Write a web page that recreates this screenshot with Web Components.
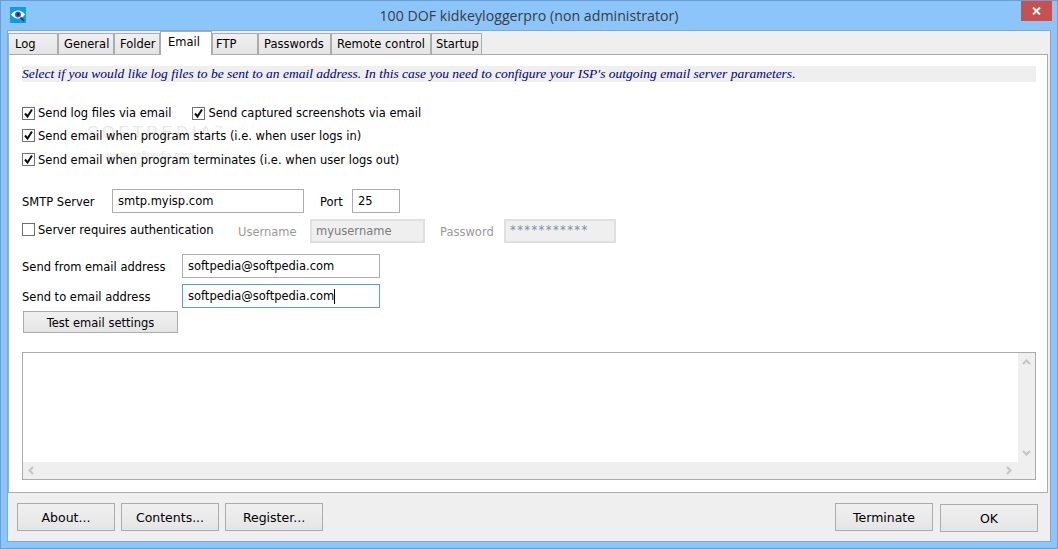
<!DOCTYPE html>
<html>
<head>
<meta charset="utf-8">
<title>100 DOF kidkeyloggerpro</title>
<style>
  html, body { margin: 0; padding: 0; height: 100%; overflow: hidden; }
  body { font: 11.5px "DejaVu Sans", sans-serif; color: #000; }
  win-button[slot] { font-size: 12.5px; }
</style>
</head>
<body>
<kid-window caption="100 DOF kidkeyloggerpro (non administrator)">
  <tab-bar slot="tabs">
    <tab-item w="50" pad="6">Log</tab-item>
    <tab-item w="56">General</tab-item>
    <tab-item w="46">Folder</tab-item>
    <tab-item w="52" pad="7" active>Email</tab-item>
    <tab-item w="46" pad="3">FTP</tab-item>
    <tab-item w="73">Passwords</tab-item>
    <tab-item w="100">Remote control</tab-item>
    <tab-item w="51" pad="4">Startup</tab-item>
  </tab-bar>

  <email-page></email-page>

  <win-button slot="left" w="98">About...</win-button>
  <win-button slot="left" w="98">Contents...</win-button>
  <win-button slot="left" w="98">Register...</win-button>
  <win-button slot="right" w="98">Terminate</win-button>
  <win-button slot="right" w="98" style="margin-top:1px">OK</win-button>
</kid-window>

<script>
class KidWindow extends HTMLElement {
  connectedCallback() {
    const caption = this.getAttribute('caption') || '';
    this.attachShadow({ mode: 'open' }).innerHTML = `
      <style>
        :host { display: flex; flex-direction: column; box-sizing: border-box; width: 1058px; height: 549px;
          background: #8bc5fa; border: 1px solid #6b9ed2; padding: 0 6px 6px 6px; }
        .title { flex: 0 0 29px; display: flex; align-items: center; justify-content: center; position: relative;
          font: 14.2px "Open Sans", sans-serif; color: #3c3c3c; }
        .title svg { position: absolute; left: 3px; top: 6px; }
        .close { position: absolute; right: -1px; top: 0; width: 31px; height: 20px; background: #c75050;
          display: flex; align-items: center; justify-content: center; }
        .panel { flex: 1; display: flex; flex-direction: column; background: #efefef; border: 1px solid #7aa9da; min-height: 0; }
        .bottom { flex: 1; display: flex; justify-content: space-between; padding: 10px 12px 0 9px; }
        .side { display: flex; gap: 6px; align-items: flex-start; }
        .side.r { gap: 7px; }
        ::slotted(tab-bar) { flex: 0 0 auto; }
      </style>
      <div class="title">
        <svg width="16" height="16" viewBox="0 0 16 16">
          <rect width="16" height="16" fill="#0a9ee2"/>
          <path d="M1 7.5 Q4 3.5 8 3.5 Q12 3.5 15 7.5 Q12 11.5 8 11.5 Q4 11.5 1 7.5Z" fill="#fff"/>
          <circle cx="8" cy="7.5" r="3" fill="#4655b8"/>
          <circle cx="8" cy="7.5" r="1.3" fill="#14205c"/>
          <path d="M10.5 10.5 L14 14" stroke="#222" stroke-width="1.6"/>
        </svg>
        <span>${caption}</span>
        <div class="close">
          <svg style="position:static" width="9" height="8" viewBox="0 0 9 8">
            <path d="M1 0.5 L8 7.5 M8 0.5 L1 7.5" stroke="#fff" stroke-width="2"/>
          </svg>
        </div>
      </div>
      <div class="panel">
        <slot name="tabs"></slot>
        <slot></slot>
        <div class="bottom">
          <div class="side"><slot name="left"></slot></div>
          <div class="side r"><slot name="right"></slot></div>
        </div>
      </div>`;
  }
}

class TabBar extends HTMLElement {
  connectedCallback() {
    this.attachShadow({ mode: 'open' }).innerHTML = `
      <style>
        :host { display: flex; align-items: flex-end; height: 23px; position: relative; z-index: 2; }
      </style>
      <slot></slot>`;
  }
}

class TabItem extends HTMLElement {
  connectedCallback() {
    const w = this.getAttribute('w');
    const pad = this.getAttribute('pad') || 5;
    this.attachShadow({ mode: 'open' }).innerHTML = `
      <style>
        :host { display: block; box-sizing: border-box; width: ${w}px; height: 21px; padding: 3px 0 0 ${pad}px;
          border: 1px solid #acacac; border-bottom: 0; background: linear-gradient(#f0f0f0, #e5e5e5); white-space: nowrap; }
        :host([active]) { height: 24px; margin-bottom: -1px; background: #fff; }
      </style>
      <slot></slot>`;
  }
}

class WinButton extends HTMLElement {
  connectedCallback() {
    const w = this.getAttribute('w');
    const h = this.getAttribute('h') || 28;
    this.attachShadow({ mode: 'open' }).innerHTML = `
      <style>
        :host { display: flex; align-items: center; justify-content: center; box-sizing: border-box;
          width: ${w}px; height: ${h}px; border: 1px solid #acacac; background: linear-gradient(#f0f0f0, #e5e5e5); white-space: nowrap; }
      </style>
      <slot></slot>`;
  }
}

class WinCheck extends HTMLElement {
  connectedCallback() {
    const mark = this.hasAttribute('checked')
      ? '<svg width="11" height="11" viewBox="0 0 11 11"><path d="M2 5.5 L4.5 8.5 L9 1.5" fill="none" stroke="#111" stroke-width="2"/></svg>'
      : '';
    this.attachShadow({ mode: 'open' }).innerHTML = `
      <style>
        :host { display: inline-flex; align-items: center; gap: 3px; white-space: nowrap; position: relative; }
        :host([low]) span { margin-top: 2px; }
        .box { box-sizing: border-box; width: 13px; height: 13px; border: 1px solid #707070; background: #fff;
          display: flex; align-items: center; justify-content: center; }
      </style>
      <div class="box">${mark}</div><span><slot></slot></span>`;
  }
}

class WinInput extends HTMLElement {
  connectedCallback() {
    const w = this.getAttribute('w');
    this.attachShadow({ mode: 'open' }).innerHTML = `
      <style>
        :host { display: flex; align-items: center; box-sizing: border-box; width: ${w}px; height: 24px; padding: 0 5px;
          border: 1px solid #acacac; background: #fff; white-space: nowrap; }
        :host([focused]) { border-color: #569de5; }
        :host([disabled]) { border: 2px solid #e0e0e0; background: #efefef; color: #7c7c7c; padding: 0 4px; }
        :host([secret]) { align-items: flex-start; color: #7f8ea3; padding-top: 2px; letter-spacing: 1.4px; }
        .caret { width: 1px; height: 15px; background: #000; }
      </style>
      <slot></slot>${this.hasAttribute('focused') ? '<div class="caret"></div>' : ''}`;
  }
}

class ScrollBox extends HTMLElement {
  connectedCallback() {
    const chev = (d) => `<svg width="9" height="9" viewBox="0 0 9 9"><path d="${d}" fill="none" stroke="#c4c4c4" stroke-width="2"/></svg>`;
    this.attachShadow({ mode: 'open' }).innerHTML = `
      <style>
        :host { display: grid; grid-template-columns: 1fr 17px; grid-template-rows: 1fr 17px; box-sizing: border-box;
          height: 128px; border: 1px solid #acacac; background: #efefef; }
        .view { background: #fff; }
        .v { display: flex; flex-direction: column; justify-content: space-between; align-items: center; padding: 5px 0; }
        .h { display: flex; justify-content: space-between; align-items: center; padding: 0 5px 0 4px; }
      </style>
      <div class="view"></div>
      <div class="v">${chev('M1 6 L4.5 2.5 L8 6')}${chev('M1 3 L4.5 6.5 L8 3')}</div>
      <div class="h">${chev('M6 1 L2.5 4.5 L6 8')}${chev('M3 1 L6.5 4.5 L3 8')}</div>
      <div></div>`;
  }
}

class EmailPage extends HTMLElement {
  connectedCallback() {
    this.attachShadow({ mode: 'open' }).innerHTML = `
      <style>
        :host { display: flex; flex-direction: column; box-sizing: border-box; position: relative; height: 439px; margin-right: 2px;
          background: #fff; border: 1px solid #acacac; padding: 11px 11px 0 13px; }
        .note { height: 16px; background: #efefef; color: #000080; white-space: nowrap;
          font: italic 13.5px/15px "Liberation Serif", serif; }
        .checks { margin-top: 20px; }
        .line { display: flex; align-items: center; height: 22px; }
        .line.gap { margin-top: 2px; }
        .line win-check:nth-child(2) { margin-left: 21px; }
        .row { display: flex; align-items: center; position: relative; }
        .row > span { margin-top: 2px; }
        .dim { color: #9a9a9a; }
        .lab1 { width: 90px; }
        .lab2 { width: 160px; }
        .mark { position: absolute; pointer-events: none; white-space: nowrap; }
        .big { left: 78px; top: 68px; color: #e9e9e9; font: 17px "Liberation Sans", sans-serif; letter-spacing: 3.5px; }
        .big sup { font-size: 8px; letter-spacing: 0; vertical-align: 7px; line-height: 0; }
        .small { left: 98px; top: 95px; color: #e6e6e6; font: 10px "Liberation Sans", sans-serif; }
      </style>
      <span class="mark big">SOFTPEDIA<sup>™</sup></span>
      <span class="mark small">www.softpedia.com</span>

      <div class="note">Select if you would like log files to be sent to an email address. In this case you need to configure your ISP's outgoing email server parameters.</div>

      <div class="checks">
        <div class="line"><win-check checked>Send log files via email</win-check><win-check checked>Send captured screenshots via email</win-check></div>
        <div class="line"><win-check checked low>Send email when program starts (i.e. when user logs in)</win-check></div>
        <div class="line gap"><win-check checked low>Send email when program terminates (i.e. when user logs out)</win-check></div>
      </div>

      <div class="row" style="margin-top:19px">
        <span class="lab1">SMTP Server</span>
        <win-input w="192">smtp.myisp.com</win-input>
        <span style="width:32px;margin-left:16px">Port</span>
        <win-input w="48">25</win-input>
      </div>
      <div class="row" style="margin-top:6px">
        <win-check style="width:216px;margin-top:-3px">Server requires authentication</win-check>
        <span class="dim" style="width:72px">Username</span>
        <win-input w="115" disabled>myusername</win-input>
        <span class="dim" style="width:64px;margin-left:15px">Password</span>
        <win-input w="112" disabled secret>***********</win-input>
      </div>
      <div class="row" style="margin-top:11px">
        <span class="lab2">Send from email address</span>
        <win-input w="198">softpedia@softpedia.com</win-input>
      </div>
      <div class="row" style="margin-top:6px">
        <span class="lab2">Send to email address</span>
        <win-input w="198" focused>softpedia@softpedia.com</win-input>
      </div>
      <win-button w="155" h="22" style="margin:3px 0 0 1px;padding-top:1px">Test email settings</win-button>

      <scroll-box style="margin-top:19px"></scroll-box>`;
  }
}

customElements.define('kid-window', KidWindow);
customElements.define('tab-bar', TabBar);
customElements.define('tab-item', TabItem);
customElements.define('win-button', WinButton);
customElements.define('win-check', WinCheck);
customElements.define('win-input', WinInput);
customElements.define('scroll-box', ScrollBox);
customElements.define('email-page', EmailPage);
</script>
</body>
</html>
